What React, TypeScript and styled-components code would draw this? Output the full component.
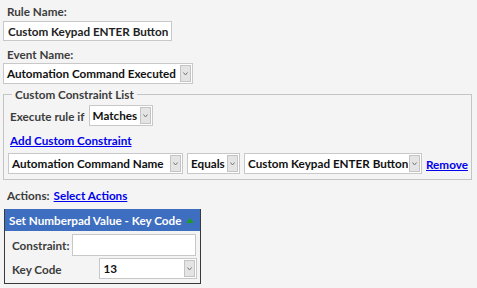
import React from "react";
import styled, { createGlobalStyle } from "styled-components";

const GlobalStyle = createGlobalStyle`
  body {
    margin: 0;
    background: #f4f4f4;
    font-family: Lato, "Open Sans", sans-serif;
    font-size: 11.7px;
    font-weight: 700;
    color: #3c3c3c;
  }
`;

const Page = styled.div`
  padding: 3px 7px 0 3px;
  display: flex;
  flex-direction: column;
  align-items: flex-start;
`;

const Label = styled.div`
  padding-left: 4px;
  height: 17px;
  line-height: 17px;
`;

const TextBox = styled.div<{ width: number }>`
  width: ${({ width }) => width}px;
  height: 20px;
  box-sizing: border-box;
  border: 1px solid #c8c8c8;
  background: #fff;
  color: #222;
  padding: 0 4px;
  line-height: 18px;
  margin: 1px 0 5px;
  white-space: nowrap;
`;

const SelectBox = styled.div<{ width: number }>`
  width: ${({ width }) => width}px;
  height: 21px;
  box-sizing: border-box;
  border: 1px solid #c8c8c8;
  background: #fff;
  color: #111;
  display: flex;
  align-items: stretch;
  white-space: nowrap;
`;

const SelectText = styled.div`
  flex: 1;
  padding-left: 3px;
  line-height: 19px;
  overflow: hidden;
`;

const ArrowCell = styled.div`
  flex: none;
  width: 9px;
  margin: 1px;
  border: 1px solid #c4c4c4;
  background: #e4e4e4;
  display: flex;
  align-items: center;
  justify-content: center;
`;

const Arrow = () => (
  <ArrowCell>
    <svg width="5" height="4" viewBox="0 0 5 4">
      <path d="M0.5 0.5 L2.5 3 L4.5 0.5" fill="none" stroke="#777" strokeWidth="1" />
    </svg>
  </ArrowCell>
);

const Select: React.FC<{ width: number; value: string }> = ({ width, value }) => (
  <SelectBox width={width}>
    <SelectText>{value}</SelectText>
    <Arrow />
  </SelectBox>
);

const Fieldset = styled.fieldset`
  margin: 3px 0 0 0;
  width: 468px;
  box-sizing: border-box;
  border: 1px solid #c4c4c4;
  padding: 4px 3px 5px 4px;
  display: flex;
  flex-direction: column;
`;

const Legend = styled.legend`
  padding: 0 3px;
  margin-left: 4px;
`;

const Row = styled.div<{ gap?: number }>`
  display: flex;
  align-items: center;
  gap: ${({ gap }) => gap ?? 4}px;
`;

const Link = styled.a`
  color: #0000ee;
  text-decoration: underline;
  cursor: pointer;
`;

const LinkLine = styled.div`
  height: 20px;
  line-height: 20px;
  margin: 4px 0 3px 2px;
`;

const ActionsRow = styled(Row)`
  margin: 6px 0 0 4px;
  height: 18px;
`;

const Panel = styled.div`
  margin: 5px 0 0 1px;
  width: 197px;
  box-sizing: border-box;
  border: 1px solid #3a3a3a;
  border-top: none;
`;

const PanelHeader = styled.div`
  background: #3d6ebf;
  color: #fff;
  height: 22px;
  padding: 0 6px 0 4px;
  display: flex;
  align-items: center;
  justify-content: space-between;
  white-space: nowrap;
`;

const PanelBody = styled.div`
  padding: 3px 3px 4px 7px;
  display: grid;
  grid-template-columns: auto 1fr;
  row-gap: 2px;
  align-items: center;
`;

const FieldLabel = styled.div``;

const BodyInput = styled(TextBox)`
  margin: 0 0 0 3px;
  height: 22px;
`;

const Indent = styled.div`
  padding-left: 30px;
`;

const Triangle = styled.div`
  width: 0;
  height: 0;
  border-left: 4px solid transparent;
  border-right: 4px solid transparent;
  border-bottom: 5px solid #1e9a2c;
`;

export default function App() {
  return (
    <Page>
      <GlobalStyle />
      <Label>Rule Name:</Label>
      <TextBox width={169}>Custom Keypad ENTER Button</TextBox>
      <Label>Event Name:</Label>
      <Select width={190} value="Automation Command Executed" />
      <Fieldset>
        <Legend>Custom Constraint List</Legend>
        <Row>
          <span style={{ paddingLeft: 2 }}>Execute rule if</span>
          <Select width={64} value="Matches" />
        </Row>
        <LinkLine>
          <Link>Add Custom Constraint</Link>
        </LinkLine>
        <Row>
          <Select width={175} value="Automation Command Name" />
          <Select width={53} value="Equals" />
          <Select width={178} value="Custom Keypad ENTER Button" />
          <Link>Remove</Link>
        </Row>
      </Fieldset>
      <ActionsRow>
        <span>Actions:</span>
        <Link>Select Actions</Link>
      </ActionsRow>
      <Panel>
        <PanelHeader>
          <span>Set Numberpad Value - Key Code</span>
          <Triangle />
        </PanelHeader>
        <PanelBody>
          <FieldLabel>Constraint:</FieldLabel>
          <BodyInput width={124} />
          <FieldLabel>Key Code</FieldLabel>
          <Indent>
            <Select width={98} value="13" />
          </Indent>
        </PanelBody>
      </Panel>
    </Page>
  );
}
